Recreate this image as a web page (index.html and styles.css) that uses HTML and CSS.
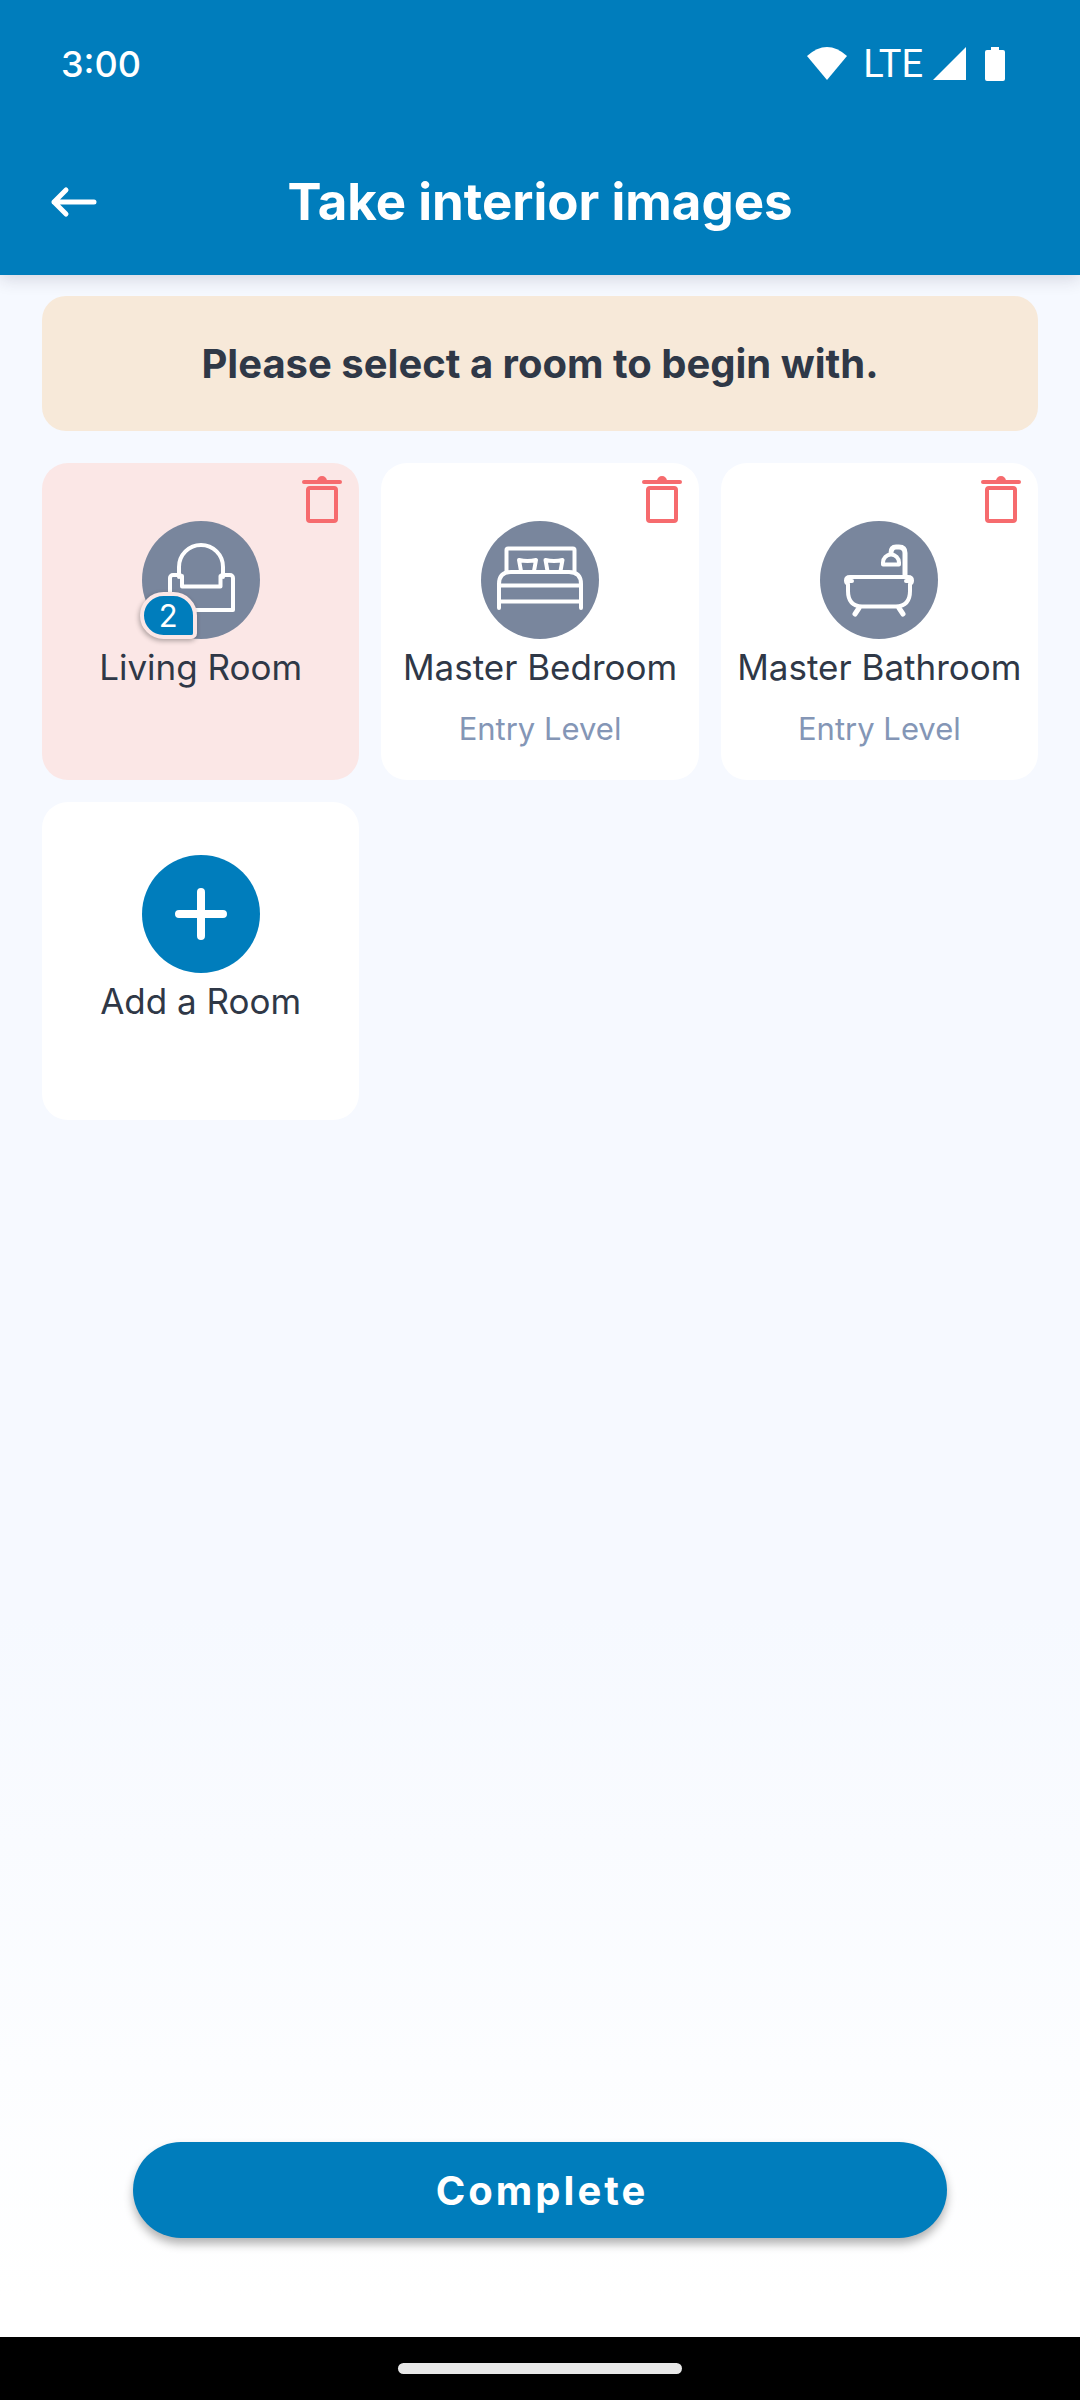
FILE: index.html
```html
<!DOCTYPE html>
<html lang="en">
<head>
  <meta charset="utf-8">
  <meta name="viewport" content="width=device-width, initial-scale=1">
  <title>Take interior images</title>
  <link rel="stylesheet" href="styles.css">
</head>
<body>
  <header class="top">
    <div class="status">
      <span class="clock">3:00</span>
      <div class="status-icons">
        <svg class="wifi" width="40" height="34" viewBox="0 0 40 34" aria-hidden="true"><path d="M0 9Q20-9 40 9L20 33Z" fill="currentColor"/></svg>
        <span class="network">LTE</span>
        <svg class="signal" width="33" height="34" viewBox="0 0 33 34" aria-hidden="true"><path d="M33 0V33H0Z" fill="currentColor"/></svg>
        <svg width="20" height="34" viewBox="0 0 20 34" aria-hidden="true"><path d="M6 0h8v3h4a2 2 0 0 1 2 2v27a2 2 0 0 1-2 2H2a2 2 0 0 1-2-2V5a2 2 0 0 1 2-2h4Z" fill="currentColor"/></svg>
      </div>
    </div>
    <div class="title-bar">
      <button class="back" type="button" aria-label="Back">
        <svg width="48" height="32" viewBox="0 0 48 32" fill="none" stroke="currentColor" stroke-width="5" stroke-linecap="round" stroke-linejoin="round" aria-hidden="true"><path d="M44 16H4M16 4L4 16l12 12"/></svg>
      </button>
      <h1 class="title">Take interior images</h1>
    </div>
  </header>

  <main class="content">
    <p class="banner">Please select a room to begin with.</p>

    <ul class="rooms">
      <li class="room room-started">
        <button class="room-open" type="button">
          <span class="room-picture">
            <svg class="room-icon" viewBox="0 0 118 118" aria-hidden="true"><path d="M37 56V46a22 22 0 0 1 44 0v10"/><path d="M38 54h-7a3 3 0 0 0-3 3v32h63V57a3 3 0 0 0-3-3h-8"/><path d="M40 55v10.500h38.500V55"/></svg>
            <span class="badge">2</span>
          </span>
          <span class="room-name">Living Room</span>
        </button>
        <button class="delete" type="button" aria-label="Delete Living Room"><svg width="40" height="48" viewBox="0 0 40 48" aria-hidden="true"><path d="M2 6h36M17 5a3 3 0 0 1 6 0"/><rect x="6" y="12" width="28" height="33" rx="2"/></svg></button>
      </li>
      <li class="room">
        <button class="room-open" type="button">
          <span class="room-picture">
            <svg class="room-icon" viewBox="0 0 118 118" aria-hidden="true"><path d="M25.500 51V29a1.500 1.500 0 0 1 1.500-1.500h65a1.500 1.500 0 0 1 1.500 1.500v22"/><path d="M40 50l-2-11q8.500 2 17 0l-2 11M66.500 50l-2-11q8.500 2 17 0l-2 11"/><path d="M18 87V63q0-12 12-12h58q12 0 12 12v24M18 64.500h82M18 80.500h82"/></svg>
          </span>
          <span class="room-name">Master Bedroom</span>
          <span class="room-level">Entry Level</span>
        </button>
        <button class="delete" type="button" aria-label="Delete Master Bedroom"><svg width="40" height="48" viewBox="0 0 40 48" aria-hidden="true"><path d="M2 6h36M17 5a3 3 0 0 1 6 0"/><rect x="6" y="12" width="28" height="33" rx="2"/></svg></button>
      </li>
      <li class="room">
        <button class="room-open" type="button">
          <span class="room-picture">
            <svg class="room-icon" viewBox="0 0 118 118" aria-hidden="true"><path d="M28 63q-2-1-2-3.500 0-3.500 4-3.500h58q4 0 4 3.500 0 2.500-2 3.500v7q0 15-14 15.500H42Q28 85 28 70Z"/><path d="M28 60h4M86 60h4"/><path d="M39 87l-4 6M79 87l4 6M85 55V32q0-6-6-6h-3q-5 0-5 6" stroke-width="5"/><path d="M63 43.500v-2a8 8 0 0 1 16 0v2Z"/></svg>
          </span>
          <span class="room-name">Master Bathroom</span>
          <span class="room-level">Entry Level</span>
        </button>
        <button class="delete" type="button" aria-label="Delete Master Bathroom"><svg width="40" height="48" viewBox="0 0 40 48" aria-hidden="true"><path d="M2 6h36M17 5a3 3 0 0 1 6 0"/><rect x="6" y="12" width="28" height="33" rx="2"/></svg></button>
      </li>
      <li class="room room-add">
        <button class="room-open" type="button">
          <span class="room-picture">
            <svg class="room-icon" viewBox="0 0 118 118" aria-hidden="true"><path d="M59 37v44M37 59h44"/></svg>
          </span>
          <span class="room-name">Add a Room</span>
        </button>
      </li>
    </ul>

    <button class="complete" type="button">Complete</button>
  </main>

  <footer class="system-nav"><span class="home-handle"></span></footer>
</body>
</html>
```
FILE: styles.css
```css
:root {
  --blue: #007dbc;
  --slate: #79869d;
  --ink: #2f3847;
  --pink: #fbe7e6;
}

* {
  box-sizing: border-box;
}

body {
  margin: 0;
  min-height: 100vh;
  display: flex;
  flex-direction: column;
  font-family: Inter, "Open Sans", sans-serif;
  color: var(--ink);
  background: #fff;
}

button {
  margin: 0;
  padding: 0;
  border: 0;
  background: none;
  font: inherit;
  color: inherit;
  cursor: pointer;
}

svg {
  display: block;
}

/* Header */
.top {
  position: relative;
  background: var(--blue);
  color: #fff;
  box-shadow: 0 4px 16px rgba(40, 30, 60, 0.16);
}

.status {
  height: 128px;
  padding: 0 75px 0 61px;
  display: flex;
  align-items: center;
  justify-content: space-between;
}

.clock {
  font-size: 36px;
  font-weight: 500;
}

.status-icons {
  display: flex;
  align-items: center;
}

.network {
  margin: 0 10px 0 16px;
  font-family: Roboto, sans-serif;
  font-size: 38px;
}

.signal {
  margin-right: 19px;
}

.title-bar {
  height: 147px;
  padding: 0 50px;
  display: grid;
  grid-template-columns: 48px 1fr 48px;
  align-items: center;
}

.title {
  margin: 0;
  font-size: 51px;
  line-height: 64px;
  font-weight: 700;
  text-align: center;
}

/* Content */
.content {
  flex: 1;
  padding: 21px 42px 99px;
  display: flex;
  flex-direction: column;
  background: linear-gradient(#f6f9ff 65%, #fff 98%);
}

.banner {
  margin: 0 0 32px;
  padding: 40px 24px 39px;
  border-radius: 24px;
  background: #f7e9d9;
  font-size: 40px;
  line-height: 56px;
  font-weight: 700;
  text-align: center;
}

.rooms {
  margin: 0 0 48px;
  padding: 0;
  list-style: none;
  display: grid;
  grid-template-columns: repeat(3, 1fr);
  gap: 22px;
}

.room {
  position: relative;
  aspect-ratio: 1;
  border-radius: 26px;
  background: #fff;
}

.room-started {
  background: var(--pink);
}

.room-open {
  width: 100%;
  height: 100%;
  padding-top: 58px;
  display: flex;
  flex-direction: column;
  align-items: center;
  justify-content: flex-start;
  white-space: nowrap;
}

.room-add .room-open {
  padding-top: 53px;
}

.room-picture {
  position: relative;
  margin-bottom: 4px;
}

.room-icon {
  width: 118px;
  height: 118px;
  border-radius: 50%;
  background: var(--slate);
  fill: none;
  stroke: #fff;
  stroke-width: 4;
  stroke-linecap: round;
  stroke-linejoin: round;
}

.room-add .room-icon {
  background: var(--blue);
  stroke-width: 8;
}

.badge {
  position: absolute;
  left: -2px;
  bottom: 0;
  width: 57px;
  height: 47px;
  border: 4px solid var(--pink);
  border-radius: 24px 24px 6px 24px;
  background: var(--blue);
  box-shadow: -1px 2px 5px rgba(0, 0, 0, 0.3);
  color: #fff;
  font-size: 31px;
  line-height: 40px;
  text-align: center;
}

.room-name {
  font-size: 35px;
  line-height: 48px;
}

.room-level {
  margin-top: 18px;
  font-size: 31px;
  line-height: 40px;
  color: #8496b6;
}

.delete {
  position: absolute;
  top: 13px;
  right: 17px;
}

.delete svg {
  fill: none;
  stroke: #f66b6e;
  stroke-width: 4;
  stroke-linecap: round;
  stroke-linejoin: round;
}

.complete {
  margin: auto 91px 0;
  padding-left: 4px;
  height: 96px;
  border-radius: 48px;
  background: var(--blue);
  box-shadow: 0 6px 10px rgba(0, 0, 0, 0.3);
  color: #fff;
  font-size: 40px;
  font-weight: 700;
  letter-spacing: 3px;
}

/* System navigation */
.system-nav {
  height: 63px;
  display: flex;
  align-items: center;
  justify-content: center;
  background: #000;
}

.home-handle {
  width: 284px;
  height: 11px;
  border-radius: 6px;
  background: #e8e8e8;
}
```
